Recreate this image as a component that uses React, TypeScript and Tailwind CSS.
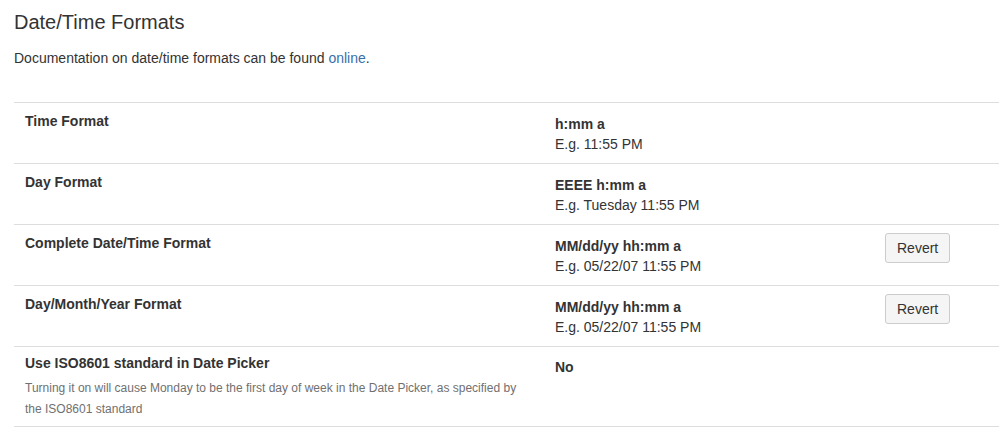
const rows = [
  { label: "Time Format", format: "h:mm a", example: "E.g. 11:55 PM", revert: false },
  { label: "Day Format", format: "EEEE h:mm a", example: "E.g. Tuesday 11:55 PM", revert: false },
  {
    label: "Complete Date/Time Format",
    format: "MM/dd/yy hh:mm a",
    example: "E.g. 05/22/07 11:55 PM",
    revert: true,
  },
  {
    label: "Day/Month/Year Format",
    format: "MM/dd/yy hh:mm a",
    example: "E.g. 05/22/07 11:55 PM",
    revert: true,
  },
];

export default function App() {
  return (
    <div
      className="min-h-[427px] bg-white pl-[14px] pt-2 text-[#333]"
      style={{ fontFamily: '"Liberation Sans", Arial, sans-serif' }}
    >
      <h2 className="text-[20px] leading-[28px] font-normal">Date/Time Formats</h2>
      <p className="mt-3 text-[14px] leading-[20px]">
        Documentation on date/time formats can be found{" "}
        <a href="#" className="text-[#3b6fa8]">
          online
        </a>
        .
      </p>

      <div className="mt-[34px] border-b border-[#dddddd]">
        {rows.map((row) => (
          <div key={row.label} className="flex border-t border-[#dddddd]">
            <div className="w-[541px] pl-[11px] pr-[26px] pt-2">
              <div className="text-[14px] leading-[20px] font-bold">{row.label}</div>
            </div>
            <div className="flex-1 pt-[11px] pb-[9px] text-[14px] leading-[20px]">
              <div className="font-bold">{row.format}</div>
              <div>{row.example}</div>
            </div>
            <div className="w-[114px] pt-2">
              {row.revert && (
                <button
                  type="button"
                  className="h-[30px] rounded-[3px] border border-[#cccccc] bg-[#f5f5f5] px-[11px] text-[14px] text-[#333]"
                >
                  Revert
                </button>
              )}
            </div>
          </div>
        ))}
        <div className="flex border-t border-[#dddddd]">
          <div className="w-[541px] pl-[11px] pr-[26px] pt-[6px] pb-[6px]">
            <div className="text-[14px] leading-[20px] font-bold">
              Use ISO8601 standard in Date Picker
            </div>
            <div className="mt-[5px] text-[12px] leading-[21px] text-[#707070]">
              Turning it on will cause Monday to be the first day of week in the Date Picker, as
              specified by the ISO8601 standard
            </div>
          </div>
          <div className="flex-1 pt-[10px] text-[14px] leading-[20px] font-bold">No</div>
          <div className="w-[114px]" />
        </div>
      </div>
    </div>
  );
}
